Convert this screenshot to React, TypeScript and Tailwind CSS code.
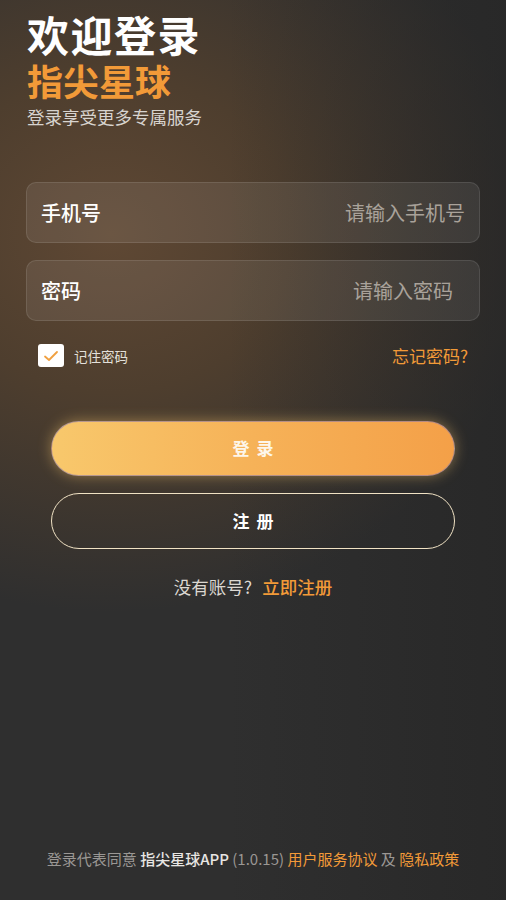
import { useState } from "react";

export default function App() {
  const [remember, setRemember] = useState(true);
  const [phone, setPhone] = useState("");
  const [password, setPassword] = useState("");

  return (
    <div
      className="relative w-full h-[900px] overflow-hidden bg-[#2f2f2f] text-white"
      style={{ fontFamily: '"Noto Sans CJK SC", "Noto Sans", sans-serif' }}
    >
      {/* background glow */}
      <div className="absolute inset-0 bg-[radial-gradient(ellipse_85%_42%_at_22%_26%,#5f4834_0%,#4e3e2e_42%,rgba(47,47,47,0)_100%)]" />
      <div className="absolute inset-0 bg-[linear-gradient(90deg,rgba(35,35,35,0)_45%,rgba(35,35,35,0.55)_100%)]" />

      <div className="relative flex flex-col h-full">
        {/* Header */}
        <div className="px-[27px] pt-[9px]">
          <h1 className="text-[42px] leading-[50px] font-bold text-white tracking-[1.5px]">欢迎登录</h1>
          <h2 className="text-[36px] leading-[42px] font-bold text-[#f29a38]">指尖星球</h2>
          <p className="mt-[4px] text-[17.5px] leading-[24px] text-[#d8d4cf]">登录享受更多专属服务</p>
        </div>

        {/* Inputs */}
        <div className="px-[26px] mt-[53px] flex flex-col gap-[17px]">
          <label className="flex items-center h-[61px] rounded-[10px] border border-white/10 bg-white/[0.08] pl-[14px] pr-[14px]">
            <span className="text-[20px] font-medium text-white shrink-0">手机号</span>
            <input
              value={phone}
              onChange={(e) => setPhone(e.target.value)}
              placeholder="请输入手机号"
              className="flex-1 min-w-0 bg-transparent text-right text-[20px] text-white placeholder:text-[#a9a29a] outline-none"
            />
          </label>
          <label className="flex items-center h-[61px] rounded-[10px] border border-white/10 bg-white/[0.08] pl-[14px] pr-[26px]">
            <span className="text-[20px] font-medium text-white shrink-0">密码</span>
            <input
              type="password"
              value={password}
              onChange={(e) => setPassword(e.target.value)}
              placeholder="请输入密码"
              className="flex-1 min-w-0 bg-transparent text-right text-[20px] text-white placeholder:text-[#a9a29a] outline-none"
            />
          </label>
        </div>

        {/* Remember / forgot */}
        <div className="flex items-center justify-between pl-[38px] pr-[38px] mt-[22px]">
          <button
            type="button"
            onClick={() => setRemember(!remember)}
            className="flex items-center gap-[10px] cursor-pointer"
          >
            <span className="w-[26px] h-[23px] rounded-[3px] bg-white flex items-center justify-center">
              {remember && (
                <svg width="16" height="12" viewBox="0 0 16 12" fill="none">
                  <path d="M2 6.5 L6 10 L14 2" stroke="#f0a040" strokeWidth="1.8" strokeLinecap="round" strokeLinejoin="round" />
                </svg>
              )}
            </span>
            <span className="text-[13.5px] text-[#e4e0da]">记住密码</span>
          </button>
          <span className="text-[17px] text-[#f29a38]">忘记密码?</span>
        </div>

        {/* Buttons */}
        <div className="px-[51px] mt-[52px] flex flex-col gap-[17px]">
          <button className="h-[55px] rounded-full bg-[linear-gradient(90deg,#f8c86c_0%,#f6b258_50%,#f4a048_100%)] border border-[#8a7aa8]/60 shadow-[0_0_14px_rgba(248,200,108,0.45)] text-[#fdf6ea] text-[17px] font-bold tracking-[7px] pl-[7px] cursor-pointer">
            登录
          </button>
          <button className="h-[56px] rounded-full border-[1.5px] border-[#f0e2c4] text-white text-[17px] font-bold tracking-[7px] pl-[7px] cursor-pointer">
            注册
          </button>
        </div>

        <div className="mt-[26px] text-center text-[17.5px] leading-[24px]">
          <span className="text-[#dcd8d2]">没有账号?</span>
          <span className="ml-[10px] text-[#f29a38] font-medium">立即注册</span>
        </div>

        {/* Footer */}
        <div className="mt-auto pb-[31px] text-center text-[15px] leading-[20px] text-[#9a9794]">
          登录代表同意 <span className="text-[#e8e6e3] font-medium">指尖星球APP</span> (1.0.15){" "}
          <span className="text-[#f29a38]">用户服务协议</span> 及{" "}
          <span className="text-[#f29a38]">隐私政策</span>
        </div>
      </div>
    </div>
  );
}
